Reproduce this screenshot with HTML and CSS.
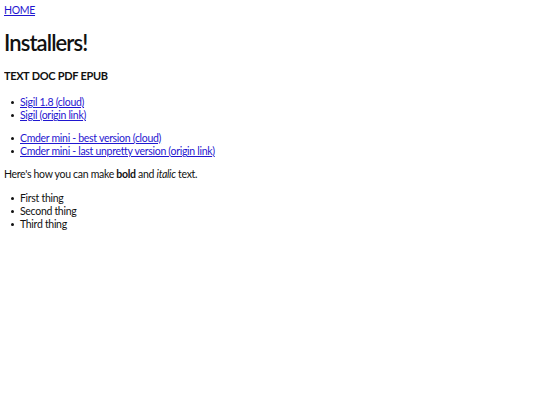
FILE: index.html
```html
<!DOCTYPE html>
<html lang="en">
<head>
<meta charset="utf-8">
<title>Installers!</title>
<link rel="stylesheet" href="styles.css">
</head>
<body>
<div class="nav"><a href="#">HOME</a></div>
<h1 class="title">Installers!</h1>
<h3 class="formats">TEXT DOC PDF EPUB</h3>
<ul class="links first">
  <li><a href="#">Sigil 1.8 (cloud)</a></li>
  <li><a href="#">Sigil (origin link)</a></li>
</ul>
<ul class="links second">
  <li><a href="#">Cmder mini - best version (cloud)</a></li>
  <li><a href="#">Cmder mini - last unpretty version (origin link)</a></li>
</ul>
<p class="note">Here's how you can make <strong>bold</strong> and <em>italic</em> text.</p>
<ul class="things">
  <li>First thing</li>
  <li>Second thing</li>
  <li>Third thing</li>
</ul>
</body>
</html>
```

FILE: styles.css
```css
body {
  margin: 4px;
  font-family: Lato, "Open Sans", sans-serif;
  font-size: 10.5px;
  line-height: 13px;
  letter-spacing: -0.3px;
  color: #111;
  background: #fff;
}
a { color: #1f16d0; }
.nav { margin: 0; }
.title {
  font-size: 22px;
  line-height: 26px;
  font-weight: 600;
  letter-spacing: -0.9px;
  margin: 13px 0 0;
}
.formats {
  font-size: 11px;
  line-height: 15px;
  font-weight: 700;
  letter-spacing: -0.4px;
  word-spacing: 0.5px;
  margin: 12px 0 13px;
}
ul {
  margin: 10px 0;
  padding-left: 16px;
  list-style: none;
}
ul.second { margin-top: 9px; }
ul.things { margin-top: 11px; }
li { position: relative; }
li::before {
  content: "";
  position: absolute;
  left: -9px;
  top: 5px;
  width: 3px;
  height: 3px;
  border-radius: 50%;
  background: #111;
}
.note { margin: 10px 0; }
strong { font-weight: 700; }
```
